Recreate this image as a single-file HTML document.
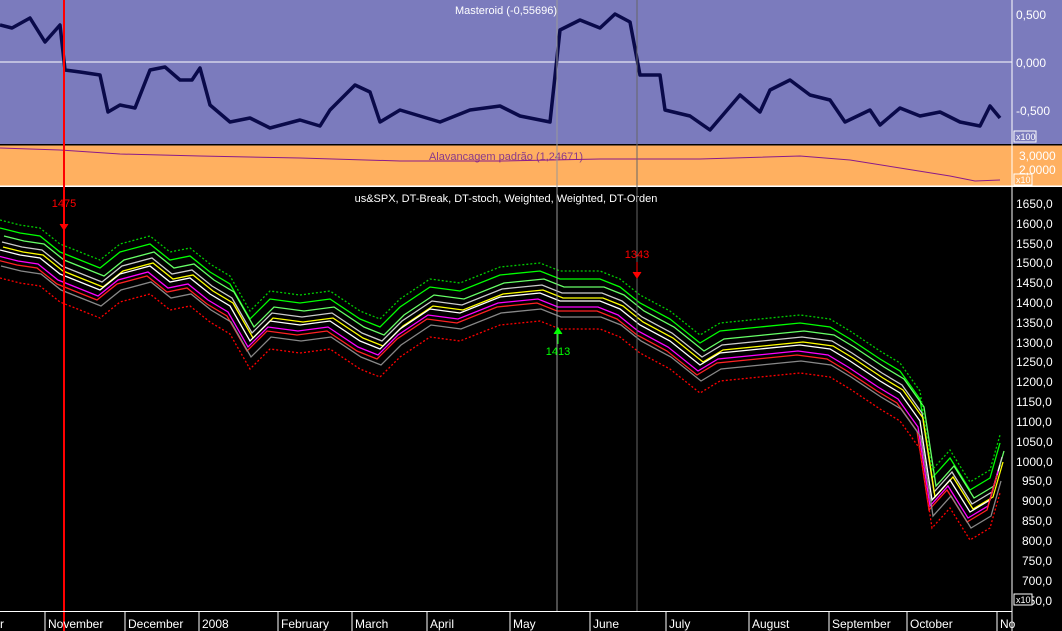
<!DOCTYPE html>
<html><head><meta charset="utf-8"><style>
html,body{margin:0;padding:0;background:#000;width:1062px;height:631px;overflow:hidden}
svg{display:block;font-family:"Liberation Sans",sans-serif}
</style></head><body>
<svg width="1062" height="631" viewBox="0 0 1062 631" xmlns="http://www.w3.org/2000/svg">
<rect x="0" y="0" width="1062" height="144" fill="#7b7bbd"/>
<rect x="0" y="144" width="1062" height="1.5" fill="#000"/>
<rect x="0" y="145.5" width="1062" height="40" fill="#ffb060"/>
<rect x="0" y="185.5" width="1062" height="1.5" fill="#fff"/>
<rect x="0" y="187" width="1062" height="444" fill="#000"/>
<line x1="0" y1="62" x2="1012" y2="62" stroke="#fff" stroke-width="1"/>
<text x="506" y="14" fill="#fff" font-size="11" text-anchor="middle">Masteroid (-0,55696)</text>
<polyline fill="none" stroke="#0a0a4a" stroke-width="3.5" stroke-linejoin="round" points="0,25 12,28 30,18 45,42 60,25 65,70 80,72 100,75 108,112 120,105 135,108 150,70 165,67 180,80 192,80 200,68 210,105 230,122 250,118 270,128 300,120 320,126 330,110 345,95 355,85 370,92 380,122 400,110 420,116 440,122 470,110 500,106 520,116 550,122 560,30 580,20 600,28 615,14 630,22 640,75 660,75 665,110 690,116 710,130 740,95 760,112 770,90 790,80 810,95 830,100 845,122 870,110 880,125 900,108 920,116 940,112 960,122 980,126 990,106 1000,118"/>
<text x="506" y="160" fill="#8a3a8a" font-size="11" text-anchor="middle">Alavancagem padrão (1,24671)</text>
<polyline fill="none" stroke="#8a1a8a" stroke-width="1" points="0,148 60,150 120,154 200,156 300,158 400,161 500,161 600,159 700,159 800,156 850,160 900,168 950,176 975,181 1000,180"/>
<text x="506" y="202" fill="#fff" font-size="11" text-anchor="middle">us&amp;SPX, DT-Break, DT-stoch, Weighted, Weighted, DT-Orden</text>
<defs><polyline id="p" fill="none" points="0,250 20,255 40,258 60,274 80,282 100,290 120,274 150,266 170,282 190,278 210,294 230,306 250,341 270,321 300,325 330,321 360,341 380,349 400,329 430,309 460,313 500,297 540,293 560,301 600,301 620,309 640,325 670,341 700,365 720,353 760,349 800,345 830,349 850,361 880,381 900,393 920,421 932,500 950,480 970,512 990,500 1000,465"/></defs>
<g stroke-width="1.3">
<use href="#p" stroke="#0f0" transform="translate(0,-22)"/>
<use href="#p" stroke="#6f6" transform="translate(4,-14)"/>
<use href="#p" stroke="#ccc" transform="translate(2,-8)"/>
<use href="#p" stroke="#ff0" transform="translate(3,-3)"/>
<use href="#p" stroke="#fff" transform="translate(0,0)"/>
<use href="#p" stroke="#f0f" transform="translate(-2,6)"/>
<use href="#p" stroke="#f22" transform="translate(-3,10)"/>
<use href="#p" stroke="#888" transform="translate(1,16)"/>
<use href="#p" stroke="#f00" stroke-dasharray="2,2" transform="translate(0,28)"/>
<use href="#p" stroke="#0c0" stroke-dasharray="2,2" transform="translate(0,-30)"/>
</g>
<line x1="64" y1="0" x2="64" y2="631" stroke="#f00" stroke-width="2"/>
<line x1="557" y1="0" x2="557" y2="611" stroke="#999" stroke-width="1"/>
<line x1="637" y1="0" x2="637" y2="611" stroke="#666" stroke-width="1"/>
<text x="64" y="207" fill="#f00" font-size="11" text-anchor="middle">1475</text>
<path d="M64,212V228M60,224L64,230L68,224" stroke="#f00" fill="#f00"/>
<text x="637" y="258" fill="#f00" font-size="11" text-anchor="middle">1343</text>
<path d="M637,262V276M633,272L637,278L641,272" stroke="#f00" fill="#f00"/>
<text x="558" y="355" fill="#0f0" font-size="11" text-anchor="middle">1413</text>
<path d="M558,344V330M554,334L558,328L562,334" stroke="#0f0" fill="#0f0"/>
<line x1="1012" y1="0" x2="1012" y2="631" stroke="#fff"/>
<g fill="#fff" font-size="12">
<text x="1016" y="19">0,500</text><text x="1016" y="67">0,000</text><text x="1016" y="115">-0,500</text>
<text x="1019" y="160">3,0000</text><text x="1019" y="174">2,0000</text>
<text x="1016" y="208">1650,0</text><text x="1016" y="228">1600,0</text><text x="1016" y="248">1550,0</text><text x="1016" y="267">1500,0</text><text x="1016" y="287">1450,0</text><text x="1016" y="307">1400,0</text><text x="1016" y="327">1350,0</text><text x="1016" y="347">1300,0</text><text x="1016" y="366">1250,0</text><text x="1016" y="386">1200,0</text><text x="1016" y="406">1150,0</text><text x="1016" y="426">1100,0</text><text x="1016" y="446">1050,0</text><text x="1016" y="466">1000,0</text><text x="1022" y="505">900,0</text><text x="1022" y="485">950,0</text><text x="1022" y="525">850,0</text><text x="1022" y="545">800,0</text><text x="1022" y="565">750,0</text><text x="1022" y="585">700,0</text><text x="1022" y="605">650,0</text>
</g>
<rect x="1014" y="131" width="22" height="11" fill="none" stroke="#fff"/><text x="1016" y="140" fill="#fff" font-size="9">x100</text>
<rect x="1014" y="174" width="18" height="11" fill="none" stroke="#fff"/><text x="1016" y="183" fill="#fff" font-size="9">x10</text>
<rect x="1014" y="594" width="18" height="11" fill="#000" stroke="#fff"/><text x="1016" y="603" fill="#fff" font-size="9">x10</text>
<line x1="0" y1="611.5" x2="1012" y2="611.5" stroke="#fff"/>
<g stroke="#fff"><line x1="45" y1="611" x2="45" y2="631"/><line x1="125" y1="611" x2="125" y2="631"/><line x1="199" y1="611" x2="199" y2="631"/><line x1="278" y1="611" x2="278" y2="631"/><line x1="352" y1="611" x2="352" y2="631"/><line x1="427" y1="611" x2="427" y2="631"/><line x1="510" y1="611" x2="510" y2="631"/><line x1="590" y1="611" x2="590" y2="631"/><line x1="666" y1="611" x2="666" y2="631"/><line x1="749" y1="611" x2="749" y2="631"/><line x1="829" y1="611" x2="829" y2="631"/><line x1="907" y1="611" x2="907" y2="631"/><line x1="997" y1="611" x2="997" y2="631"/></g>
<g fill="#fff" font-size="12">
<text x="0" y="628">r</text><text x="48" y="628">November</text><text x="128" y="628">December</text><text x="202" y="628">2008</text><text x="281" y="628">February</text><text x="355" y="628">March</text><text x="430" y="628">April</text><text x="513" y="628">May</text><text x="593" y="628">June</text><text x="669" y="628">July</text><text x="752" y="628">August</text><text x="832" y="628">September</text><text x="910" y="628">October</text><text x="1000" y="628">No</text>
</g>
</svg>
</body></html>
